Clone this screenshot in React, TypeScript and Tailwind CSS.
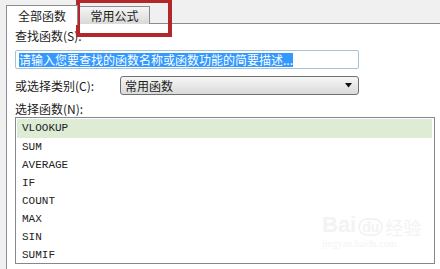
import React from 'react';

const items = ['VLOOKUP', 'SUM', 'AVERAGE', 'IF', 'COUNT', 'MAX', 'SIN', 'SUMIF'];

const cjk = "font-['SimSun','Noto_Sans_CJK_SC',sans-serif]";

export default function App() {
  return (
    <div
      className={`relative w-[440px] h-[269px] overflow-hidden bg-[#f0f0f0] text-[12px] leading-none text-[#1a1a1a] ${cjk}`}
    >
      {/* tab strip */}
      <div className="flex items-end h-[24px] pl-[6px]">
        <div className="flex items-center justify-center w-[72px] h-[20px] bg-white border border-b-0 border-[#898c95] relative z-10 top-px">
          全部函数
        </div>
        <div className="flex items-center justify-center w-[71px] h-[18px] ml-px bg-gradient-to-b from-[#f5f5f5] to-[#d9d9d9] border border-[#898c95] border-b-0">
          常用公式
        </div>
        <div className="flex-1 h-px bg-[#898c95]" />
      </div>

      {/* panel */}
      <div className="ml-[6px] h-[245px] bg-white border-l border-[#898c95] pl-[8px] pt-[5px]">
        <div className="h-[12px] flex items-center mt-[1px]">查找函数(S):</div>
        <div className="mt-[8px] w-[344px] h-[19px] border border-[#a9c2d3] rounded-[2px] flex items-center pl-[3px]">
          <span className="bg-[#3399ff] text-white h-[14px] flex items-center">请输入您要查找的函数名称或函数功能的简要描述...</span>
        </div>

        <div className="mt-[7px] flex items-center">
          <span className="w-[105px]">或选择类别(C):</span>
          <div className="w-[239px] h-[19px] border border-[#707070] rounded-[3px] bg-gradient-to-b from-[#f6f6f6] to-[#dadada] flex items-center justify-between pl-[4px] pr-[5px]">
            <span>常用函数</span>
            <svg width="8" height="5" viewBox="0 0 8 5">
              <path d="M0 0 H7 L3.5 4.5 Z" fill="#111" />
            </svg>
          </div>
        </div>

        <div className="mt-[8px] h-[12px] flex items-center">选择函数(N):</div>

        <div className="mt-[2px] w-[420px] h-[147px] border border-[#828790] font-['Liberation_Mono',monospace] text-[11px] text-[#222] pt-px pl-px pr-[2px]">
          <div className="h-[19px] bg-[#deecd6] flex items-center pl-[5px]">VLOOKUP</div>
          {items.slice(1).map((it) => (
            <div key={it} className="h-[18px] flex items-center pl-[5px]">
              {it}
            </div>
          ))}
        </div>
      </div>

      {/* red highlight box */}
      <div className="absolute left-[76px] top-[-1px] w-[96px] h-[38px] border-[4px] border-[#b3272a]" />

      {/* watermark */}
      <div className="absolute left-[322px] top-[214px] text-[#f3f3f3] font-['Liberation_Sans',sans-serif] pointer-events-none">
        <div className="flex items-end gap-[2px]">
          <span className="text-[22px] font-bold">Bai</span>
          <span className="text-[14px] font-bold rounded-full border-2 border-[#f3f3f3] px-[2px]">du</span>
          <span className={`text-[18px] ${cjk}`}>经验</span>
        </div>
        <div className="text-[10px] mt-[3px] font-['Liberation_Serif',serif]">jingyan.baidu.com</div>
      </div>
    </div>
  );
}
